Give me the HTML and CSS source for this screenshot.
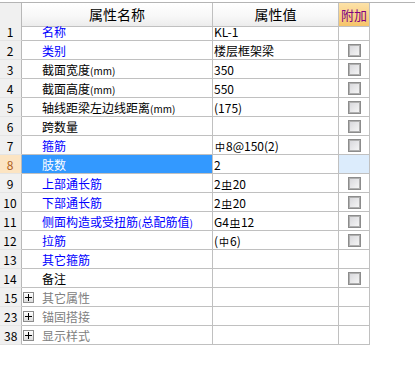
FILE: index.html
```html
<!DOCTYPE html>
<html lang="zh">
<head>
<meta charset="utf-8">
<link rel="stylesheet" href="styles.css">
</head>
<body>
<div class="sheet">
  <div class="grid">
    <div class="c num hd"></div>
    <div class="c hd hname">属性名称</div>
    <div class="c hd hval">属性值</div>
    <div class="c hd hext">附加</div>

    <div class="c num">1</div><div class="c name blue">名称</div><div class="c val">KL-1</div><div class="c ext"></div>
    <div class="c num">2</div><div class="c name blue">类别</div><div class="c val">楼层框架梁</div><div class="c ext"><span class="cb"></span></div>
    <div class="c num">3</div><div class="c name">截面宽度<span class="unit">(mm)</span></div><div class="c val">350</div><div class="c ext"><span class="cb"></span></div>
    <div class="c num">4</div><div class="c name">截面高度<span class="unit">(mm)</span></div><div class="c val">550</div><div class="c ext"><span class="cb"></span></div>
    <div class="c num">5</div><div class="c name">轴线距梁左边线距离<span class="unit">(mm)</span></div><div class="c val">(175)</div><div class="c ext"><span class="cb"></span></div>
    <div class="c num">6</div><div class="c name">跨数量</div><div class="c val"></div><div class="c ext"><span class="cb"></span></div>
    <div class="c num">7</div><div class="c name blue">箍筋</div><div class="c val"><span class="sym">中</span>8@150(2)</div><div class="c ext"><span class="cb"></span></div>
    <div class="c num sel">8</div><div class="c name selname">肢数</div><div class="c val">2</div><div class="c ext selext"></div>
    <div class="c num">9</div><div class="c name blue">上部通长筋</div><div class="c val">2<span class="sym b">中</span>20</div><div class="c ext"><span class="cb"></span></div>
    <div class="c num">10</div><div class="c name blue">下部通长筋</div><div class="c val">2<span class="sym b">中</span>20</div><div class="c ext"><span class="cb"></span></div>
    <div class="c num">11</div><div class="c name blue">侧面构造或受扭筋<span class="unit">(</span>总配筋值<span class="unit">)</span></div><div class="c val">G4<span class="sym b">中</span>12</div><div class="c ext"><span class="cb"></span></div>
    <div class="c num">12</div><div class="c name blue">拉筋</div><div class="c val">(<span class="sym">中</span>6)</div><div class="c ext"><span class="cb"></span></div>
    <div class="c num">13</div><div class="c name blue">其它箍筋</div><div class="c val"></div><div class="c ext"></div>
    <div class="c num">14</div><div class="c name">备注</div><div class="c val"></div><div class="c ext"><span class="cb"></span></div>

    <div class="c num grp">15</div><div class="c name gname"><span class="plus"></span>其它属性</div><div class="c val"></div><div class="c ext"></div>
    <div class="c num grp">23</div><div class="c name gname"><span class="plus"></span>锚固搭接</div><div class="c val"></div><div class="c ext"></div>
    <div class="c num grp">38</div><div class="c name gname"><span class="plus"></span>显示样式</div><div class="c val"></div><div class="c ext"></div>
  </div>
</div>
</body>
</html>
```

FILE: styles.css
```css
html, body {
  margin: 0;
  padding: 0;
  background: #fff;
}
body {
  font-family: "Noto Sans CJK SC", "DejaVu Sans", sans-serif;
  font-size: 12px;
  color: #000;
}
.sheet {
  margin-top: 2px;
  border-top: 1px solid #b4b4b4;
}
.grid {
  display: grid;
  grid-template-columns: 22px 191px 126px 31px;
  grid-auto-rows: 19px;
  width: 370px;
}
.c {
  box-sizing: border-box;
  border-right: 1px solid #c0c0c0;
  border-bottom: 1px solid #c0c0c0;
  height: 19px;
  line-height: 19px;
  white-space: nowrap;
  overflow: hidden;
}
.hd {
  height: 24px;
  line-height: 23px;
  font-size: 14px;
  text-align: center;
  background: linear-gradient(#ffffff, #f7f7f7 60%, #ececec);
}
.num {
  background: #f0f0f0;
  border-right-color: #b8b8b8;
  border-bottom-color: #e4e4e4;
  text-align: center;
  font-size: 12px;
  padding-right: 1px;
}
.num.hd {
  background: #f0f0f0;
  border-bottom-color: #c0c0c0;
}
.hext {
  background: linear-gradient(#fde2a8, #f6c46a);
  color: #800080;
  font-size: 13px;
}
.name {
  padding-left: 20px;
}
.unit {
  font-size: 10px;
}
.blue {
  color: #0000ff;
}
.val {
  padding-left: 1px;
  font-size: 12px;
}
.sym {
  font-size: 10px;
  margin: 0 1px;
}
.sym.b {
  text-decoration: underline;
  text-underline-offset: 0px;
}
.ext {
  display: flex;
  align-items: center;
  justify-content: center;
}
.cb {
  box-sizing: border-box;
  width: 13px;
  height: 13px;
  border: 1px solid #8c8c8c;
  box-shadow: inset 0 0 0 1px #b0b0b0;
  background: linear-gradient(135deg, #d6d6da, #f8f8f8);
}
.sel {
  background: #fce4c2;
  color: #b06020;
}
.selname {
  background: #3399ff;
  color: #fff;
}
.selext {
  background: #dcecfc;
}
.grp {
  text-align: left;
  padding-left: 4px;
}
.gname {
  padding-left: 0;
  color: #808080;
  display: flex;
  align-items: center;
}
.plus {
  position: relative;
  box-sizing: border-box;
  width: 11px;
  height: 11px;
  margin-left: 1px;
  margin-right: 8px;
  border: 1px solid #8c8c8c;
  background: linear-gradient(#ffffff, #dcdcdc);
}
.plus::before,
.plus::after {
  content: "";
  position: absolute;
  background: #000;
}
.plus::before {
  left: 1px;
  right: 1px;
  top: 4px;
  height: 1px;
}
.plus::after {
  top: 1px;
  bottom: 1px;
  left: 4px;
  width: 1px;
}
```
